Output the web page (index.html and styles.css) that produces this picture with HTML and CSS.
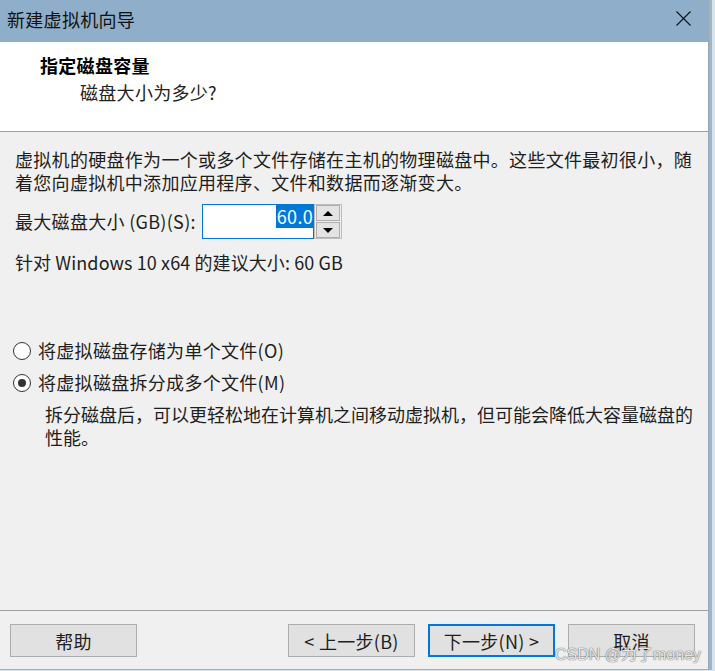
FILE: index.html
```html
<!DOCTYPE html>
<html lang="zh-CN">
<head>
  <meta charset="UTF-8" />
  <meta name="viewport" content="width=device-width, initial-scale=1.0"/>
  <title>新建虚拟机向导</title>
  <link rel="stylesheet" href="styles.css">
</head>
<body>

  <!-- Wizard Window -->
  <div class="window">
    <div class="titlebar">
      <span class="title">新建虚拟机向导</span>
      <svg class="close" width="15" height="15" viewBox="0 0 15 15">
        <path d="M0.5 0.5L14.5 14.5M14.5 0.5L0.5 14.5" stroke="#111" stroke-width="1.1" fill="none"/>
      </svg>
    </div>

    <div class="header">
      <div class="head-title">指定磁盘容量</div>
      <div class="head-sub">磁盘大小为多少?</div>
    </div>

    <div class="content">
      <p class="intro">虚拟机的硬盘作为一个或多个文件存储在主机的物理磁盘中。这些文件最初很小，随<br>着您向虚拟机中添加应用程序、文件和数据而逐渐变大。</p>

      <div class="size-row">
        <label class="size-label">最大磁盘大小 (GB)(S):</label>
        <div class="spin">
          <div class="spin-input"><span class="sel">60.0</span></div>
          <div class="spin-btns">
            <div class="spin-btn"><span class="arrow-up"></span></div>
            <div class="spin-btn"><span class="arrow-down"></span></div>
          </div>
        </div>
      </div>

      <p class="hint">针对 Windows 10 x64 的建议大小: 60 GB</p>

      <div class="radio-row first">
        <span class="radio"></span>
        <span>将虚拟磁盘存储为单个文件(O)</span>
      </div>
      <div class="radio-row">
        <span class="radio checked"></span>
        <span>将虚拟磁盘拆分成多个文件(M)</span>
      </div>
      <p class="radio-desc">拆分磁盘后，可以更轻松地在计算机之间移动虚拟机，但可能会降低大容量磁盘的<br>性能。</p>
    </div>

    <div class="footer">
      <button class="btn">帮助</button>
      <div class="nav-buttons">
        <button class="btn">&lt; 上一步(B)</button>
        <button class="btn default">下一步(N) &gt;</button>
        <button class="btn">取消</button>
      </div>
    </div>
  </div>

  <div class="watermark">CSDN @为了money</div>

</body>
</html>
```

FILE: styles.css
```css
/* Page */
body {
  margin: 0;
  background-color: #d9e3ec;
  font-family: "Noto Sans CJK SC", "Noto Sans", sans-serif;
  font-size: 18px;
  letter-spacing: 0.3px;
  color: #1e1e1e;
  width: 715px;
  height: 671px;
  overflow: hidden;
  position: relative;
}

/* Window frame */
.window {
  width: 708px;
  height: 669px;
  background-color: #f0f0f0;
  border-right: 1px solid #9aa6b2;
  border-bottom: 1px solid #97b3cc;
  box-shadow: 3px 0 0 #9bb6ce;
  display: flex;
  flex-direction: column;
}

/* Title bar */
.titlebar {
  height: 42px;
  flex-shrink: 0;
  background-color: #8eaec9;
  display: flex;
  align-items: center;
  justify-content: space-between;
  padding: 0 17px 0 7px;
}

.title {
  color: #111;
  line-height: 24px;
  margin-top: -4px;
}

.close {
  margin-top: -6px;
}

/* Header */
.header {
  flex-shrink: 0;
  background-color: #ffffff;
  border-bottom: 1px solid #a0a0a0;
  padding-top: 11px;
  box-sizing: border-box;
  height: 90px;
}

.head-title {
  padding-left: 40px;
  font-weight: 700;
  line-height: 24px;
  color: #000;
}

.head-sub {
  padding-left: 80px;
  margin-top: 3px;
  line-height: 24px;
  color: #222;
}

/* Content */
.content {
  flex: 1;
  padding: 16px 0 0 15px;
}

.content p {
  margin: 0;
  line-height: 23px;
  white-space: nowrap;
}

.size-row {
  display: flex;
  align-items: center;
  margin-top: 10px;
}

.size-label {
  width: 187px;
  line-height: 23px;
}

.spin {
  display: flex;
  height: 35px;
}

.spin-input {
  width: 110px;
  height: 33px;
  background-color: #ffffff;
  border: 1px solid #0078d7;
  display: flex;
  justify-content: flex-end;
  align-items: flex-start;
}

.sel {
  background-color: #0078d7;
  color: #ffffff;
  line-height: 23px;
  padding: 0 0 0 1px;
  font-size: 18px;
}

.spin-btns {
  width: 24px;
  height: 33px;
  border: 1px solid #bdbdbd;
  display: flex;
  flex-direction: column;
  gap: 1px;
  padding: 0 1px;
}

.spin-btn {
  flex: 1;
  background-color: #e3e3e3;
  border: 1px solid #adadad;
  display: flex;
  align-items: center;
  justify-content: center;
}

.arrow-up {
  width: 0;
  height: 0;
  border-left: 5px solid transparent;
  border-right: 5px solid transparent;
  border-bottom: 5px solid #000;
}

.arrow-down {
  width: 0;
  height: 0;
  border-left: 5px solid transparent;
  border-right: 5px solid transparent;
  border-top: 5px solid #000;
}

.content .hint {
  margin-top: 12px;
  letter-spacing: 0.1px;
}

/* Radio options */
.radio-row {
  display: flex;
  align-items: center;
  gap: 7px;
  margin-left: -2px;
  margin-top: 9px;
  line-height: 23px;
}

.radio-row.first {
  margin-top: 65px;
}

.radio {
  width: 16px;
  height: 16px;
  border: 1px solid #333;
  border-radius: 50%;
  background-color: #ffffff;
  display: flex;
  align-items: center;
  justify-content: center;
}

.radio.checked::after {
  content: "";
  width: 8px;
  height: 8px;
  border-radius: 50%;
  background-color: #333;
}

.content .radio-desc {
  margin-top: 9px;
  padding-left: 30px;
  letter-spacing: 0;
}

/* Footer */
.footer {
  flex-shrink: 0;
  border-top: 1px solid #a0a0a0;
  display: flex;
  justify-content: space-between;
  align-items: flex-start;
  padding: 13px 13px 0 10px;
  box-sizing: border-box;
  height: 59px;
}

.nav-buttons {
  display: flex;
  gap: 13px;
}

.btn {
  width: 127px;
  height: 33px;
  background-color: #e1e1e1;
  border: 1px solid #adadad;
  font-family: inherit;
  font-size: 18px;
  letter-spacing: 0.3px;
  color: #1e1e1e;
  padding: 0;
}

.btn.default {
  border: 2px solid #0078d7;
}

/* Watermark */
.watermark {
  position: absolute;
  left: 555px;
  top: 641px;
  font-family: "Liberation Sans", "Noto Sans CJK SC", sans-serif;
  font-size: 16px;
  letter-spacing: 0;
  color: rgba(255, 255, 255, 0.85);
  text-shadow: 0 0 1px #666, 0 0 1px #666;
}
```
